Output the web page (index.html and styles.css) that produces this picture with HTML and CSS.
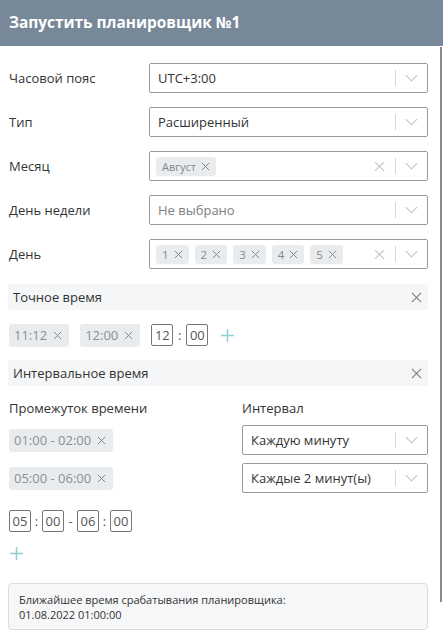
FILE: index.html
```html
<!DOCTYPE html>
<html lang="ru">
<head>
<meta charset="utf-8">
<link rel="stylesheet" href="styles.css">
</head>
<body>
<div class="dialog">
  <div class="header">Запустить планировщик №1</div>
  <div class="content">
    <div class="form">
      <div class="row">
        <div class="label">Часовой пояс</div>
        <div class="select"><div class="value">UTC+3:00</div><div class="ind"><span class="sep"></span><svg class="chev" viewBox="0 0 14 8"><path d="M1 1l6 6 6-6"/></svg></div></div>
      </div>
      <div class="row">
        <div class="label">Тип</div>
        <div class="select"><div class="value">Расширенный</div><div class="ind"><span class="sep"></span><svg class="chev" viewBox="0 0 14 8"><path d="M1 1l6 6 6-6"/></svg></div></div>
      </div>
      <div class="row">
        <div class="label">Месяц</div>
        <div class="select"><div class="value tags"><span class="tag">Август<svg class="x" viewBox="0 0 10 10"><path d="M1 1l8 8M9 1l-8 8"/></svg></span></div><div class="ind"><svg class="clr" viewBox="0 0 10 10"><path d="M1 1l8 8M9 1l-8 8"/></svg><span class="sep"></span><svg class="chev" viewBox="0 0 14 8"><path d="M1 1l6 6 6-6"/></svg></div></div>
      </div>
      <div class="row">
        <div class="label">День недели</div>
        <div class="select"><div class="value placeholder">Не выбрано</div><div class="ind"><span class="sep"></span><svg class="chev" viewBox="0 0 14 8"><path d="M1 1l6 6 6-6"/></svg></div></div>
      </div>
      <div class="row">
        <div class="label">День</div>
        <div class="select"><div class="value tags">
          <span class="tag num">1<svg class="x" viewBox="0 0 10 10"><path d="M1 1l8 8M9 1l-8 8"/></svg></span>
          <span class="tag num">2<svg class="x" viewBox="0 0 10 10"><path d="M1 1l8 8M9 1l-8 8"/></svg></span>
          <span class="tag num">3<svg class="x" viewBox="0 0 10 10"><path d="M1 1l8 8M9 1l-8 8"/></svg></span>
          <span class="tag num">4<svg class="x" viewBox="0 0 10 10"><path d="M1 1l8 8M9 1l-8 8"/></svg></span>
          <span class="tag num">5<svg class="x" viewBox="0 0 10 10"><path d="M1 1l8 8M9 1l-8 8"/></svg></span>
        </div><div class="ind"><svg class="clr" viewBox="0 0 10 10"><path d="M1 1l8 8M9 1l-8 8"/></svg><span class="sep"></span><svg class="chev" viewBox="0 0 14 8"><path d="M1 1l6 6 6-6"/></svg></div></div>
      </div>
    </div>

    <div class="section-bar"><span>Точное время</span><svg class="bar-x" viewBox="0 0 12 12"><path d="M1 1l10 10M11 1l-10 10"/></svg></div>
    <div class="exact-row">
      <span class="chip">11:12<svg class="x" viewBox="0 0 10 10"><path d="M1 1l8 8M9 1l-8 8"/></svg></span>
      <span class="chip">12:00<svg class="x" viewBox="0 0 10 10"><path d="M1 1l8 8M9 1l-8 8"/></svg></span>
      <div class="time-input"><span class="tbox">12</span><span class="colon">:</span><span class="tbox">00</span></div>
      <svg class="plus" viewBox="0 0 16 16"><path d="M8 1v14M1 8h14"/></svg>
    </div>

    <div class="section-bar"><span>Интервальное время</span><svg class="bar-x" viewBox="0 0 12 12"><path d="M1 1l10 10M11 1l-10 10"/></svg></div>
    <div class="interval">
      <div class="col-label">Промежуток времени</div>
      <div class="col-label">Интервал</div>
      <div class="cell"><span class="chip">01:00 - 02:00<svg class="x" viewBox="0 0 10 10"><path d="M1 1l8 8M9 1l-8 8"/></svg></span></div>
      <div class="select"><div class="value">Каждую минуту</div><div class="ind"><span class="sep"></span><svg class="chev" viewBox="0 0 14 8"><path d="M1 1l6 6 6-6"/></svg></div></div>
      <div class="cell"><span class="chip">05:00 - 06:00<svg class="x" viewBox="0 0 10 10"><path d="M1 1l8 8M9 1l-8 8"/></svg></span></div>
      <div class="select"><div class="value">Каждые 2 минут(ы)</div><div class="ind"><span class="sep"></span><svg class="chev" viewBox="0 0 14 8"><path d="M1 1l6 6 6-6"/></svg></div></div>
    </div>
    <div class="time-input range"><span class="tbox">05</span><span class="colon">:</span><span class="tbox">00</span><span class="dash">-</span><span class="tbox">06</span><span class="colon">:</span><span class="tbox">00</span></div>
    <svg class="plus add" viewBox="0 0 16 16"><path d="M8 1v14M1 8h14"/></svg>

    <div class="info">Ближайшее время срабатывания планировщика:<br>01.08.2022 01:00:00</div>
  </div>
  <div class="scrollbar"></div>
</div>
</body>
</html>
```
FILE: styles.css
```css
* { box-sizing: border-box; }
html, body { margin: 0; padding: 0; background: #fff; }
body { font-family: "Open Sans", "Liberation Sans", sans-serif; color: #333; font-size: 13px; }
.dialog { position: relative; width: 443px; height: 635px; overflow: hidden; }
.header {
  height: 46px; background: #778899; color: #fff;
  font-weight: 700; font-size: 15.4px; line-height: 46px; padding-left: 9px;
}
.content { padding: 17px 15px 0 8px; }
.form { display: flex; flex-direction: column; gap: 14px; }
.row { display: grid; grid-template-columns: 141px 1fr; align-items: center; }
.label { padding-left: 1px; font-size: 13px; color: #333; }
.select {
  height: 30px; border: 1px solid #9a9a9a; border-radius: 2px;
  display: flex; align-items: center; background: #fff;
}
.value { flex: 1; padding-left: 8px; font-size: 13px; color: #333; white-space: nowrap; overflow: hidden; }
.placeholder { color: #808080; }
.tags { display: flex; gap: 6px; padding-left: 6px; }
.tag {
  display: inline-flex; align-items: center; gap: 5px; height: 19px;
  padding: 0 6px; background: #e9ecef; border-radius: 3px;
  font-size: 11px; color: #888;
}
.tag.num { font-size: 11.5px; padding: 0 6px 0 6px; gap: 5px; }
.x { width: 9px; height: 9px; fill: none; stroke: #8a8a8a; stroke-width: 1.1; }
.ind { display: flex; align-items: center; height: 100%; padding-right: 9px; }
.clr { width: 11px; height: 11px; fill: none; stroke: #c4c4c4; stroke-width: 1; margin-right: 10px; }
.sep { width: 1px; height: 16px; background: #d6d6d6; margin-right: 9px; }
.chev { width: 13px; height: 8px; fill: none; stroke: #c0c0c0; stroke-width: 1.1; }

.section-bar {
  margin-top: 15px; height: 26px; background: #f4f6f8; border-radius: 3px;
  display: flex; align-items: center; justify-content: space-between;
  padding: 0 6px 0 5px; font-size: 13px; color: #333;
}
.section-bar + .exact-row { margin-top: 14px; }
.exact-row + .section-bar { margin-top: 14px; }
.bar-x { width: 11px; height: 11px; fill: none; stroke: #777; stroke-width: 1.1; }

.exact-row { display: flex; align-items: center; height: 22px; padding-left: 1px; }
.chip {
  display: inline-flex; align-items: center; gap: 6px; height: 23px;
  padding: 0 7px 0 5px; background: #e9ecef; border-radius: 3px;
  font-size: 13px; color: #8a8f96; white-space: nowrap;
}
.exact-row .chip { margin-right: 11px; }
.time-input { display: flex; align-items: center; }
.tbox {
  width: 22px; height: 22px; border: 1px solid #777; border-radius: 2px;
  font-size: 13px; color: #555; display: flex; align-items: center; justify-content: center;
}
.colon { width: 13px; text-align: center; font-size: 13px; color: #555; }
.dash { width: 13px; text-align: center; font-size: 13px; color: #555; }
.range .colon { width: 11px; }
.plus { width: 15px; height: 15px; fill: none; stroke: #8fd0d4; stroke-width: 1.6; margin-left: 12px; }

.interval {
  margin-top: 13px; padding-left: 1px;
  display: grid; grid-template-columns: 233px 1fr; row-gap: 8px; align-items: center;
}
.col-label { font-size: 13px; color: #333; line-height: 18px; }
.interval .select { height: 30px; }
.cell { display: flex; align-items: center; }

.range { margin-top: 17px; padding-left: 1px; }
.plus.add { display: block; margin: 14px 0 0 1px; }

.info {
  margin-top: 22px; border: 1px solid #dcdcdc; border-radius: 4px; background: #f6f7f8;
  padding: 8px 10px; font-size: 11px; line-height: 15px; color: #333; height: 47px;
}
.scrollbar { position: absolute; right: 1px; top: 47px; width: 2px; height: 555px; background: #8a8a8a; }
```
